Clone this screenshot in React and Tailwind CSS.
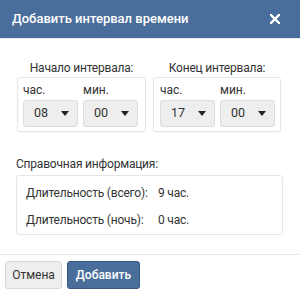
import React from "react";

function Select({ value }) {
  return (
    <div className="flex h-[27px] w-[55px] items-center justify-between rounded-[3px] border border-[#dcdcdc] bg-[#eeeeee] pl-[10px] pr-[8px] text-[12.5px] text-[#333]">
      <span>{value}</span>
      <svg width="8" height="5" viewBox="0 0 8 5"><path d="M0 0h8L4 5z" fill="#222" /></svg>
    </div>
  );
}

function Interval({ title, h, m, w, pl }) {
  return (
    <div className="flex flex-col">
      <div className="text-center text-[12px] tracking-[-0.2px] leading-[17px] text-[#333]">{title}</div>
      <div className={`flex gap-[5px] rounded-[3px] border border-[#e6e6e6] pt-[5px] pb-[4px] shadow-[0_1px_2px_rgba(0,0,0,0.04)] ${w} ${pl}`}>
        <div className="flex flex-col">
          <div className="text-[12px] leading-[15px] text-[#333] mb-[2px]">час.</div>
          <Select value={h} />
        </div>
        <div className="flex flex-col">
          <div className="text-[12px] leading-[15px] text-[#333] mb-[2px]">мин.</div>
          <Select value={m} />
        </div>
      </div>
    </div>
  );
}

export default function App() {
  return (
    <div className="w-[300px] h-[295px] bg-white flex flex-col" style={{ fontFamily: "Roboto, 'Noto Sans', sans-serif" }}>
      <div className="h-[39px] shrink-0 bg-[#4a6e9b] flex items-center justify-between pl-[12px] pr-[20px] border-b border-[#e8e8e8]">
        <span className="text-white text-[13px] font-medium">Добавить интервал времени</span>
        <svg width="10" height="10" viewBox="0 0 10 10"><path d="M1 1L9 9M9 1L1 9" stroke="white" strokeWidth="2.4" strokeLinecap="square" /></svg>
      </div>
      <div className="flex gap-[7px] pl-[17px] pt-[21px]">
        <Interval title="Начало интервала:" h="08" m="00" w="w-[129px]" pl="pl-[5px]" />
        <Interval title="Конец интервала:" h="17" m="00" w="w-[128px]" pl="pl-[6px]" />
      </div>
      <div className="pl-[16px] pr-[17px] pt-[24px]">
        <div className="text-[12px] tracking-[-0.2px] leading-[17px] text-[#333] mb-[2px]">Справочная информация:</div>
        <div className="rounded-[3px] border border-[#e6e6e6] pl-[9px] pt-[5px] pb-[2px] text-[12px] tracking-[-0.2px] text-[#333]">
          <div className="flex h-[24px] items-center"><span className="w-[132px]">Длительность (всего):</span><span>9 час.</span></div>
          <div className="flex h-[24px] items-center mt-[3px]"><span className="w-[132px]">Длительность (ночь):</span><span>0 час.</span></div>
        </div>
      </div>
      <div className="mt-[19px] border-t border-[#e5e5e5] flex gap-[5px] pl-[5px] pt-[6px]">
        <button className="h-[28px] w-[57px] rounded-[3px] border border-[#d8d8d8] bg-[#eeeeee] text-[12px] text-[#333]">Отмена</button>
        <button className="h-[28px] w-[73px] rounded-[3px] border border-[#37577f] bg-[#4a6e9b] text-[12px] font-medium text-white">Добавить</button>
      </div>
    </div>
  );
}
